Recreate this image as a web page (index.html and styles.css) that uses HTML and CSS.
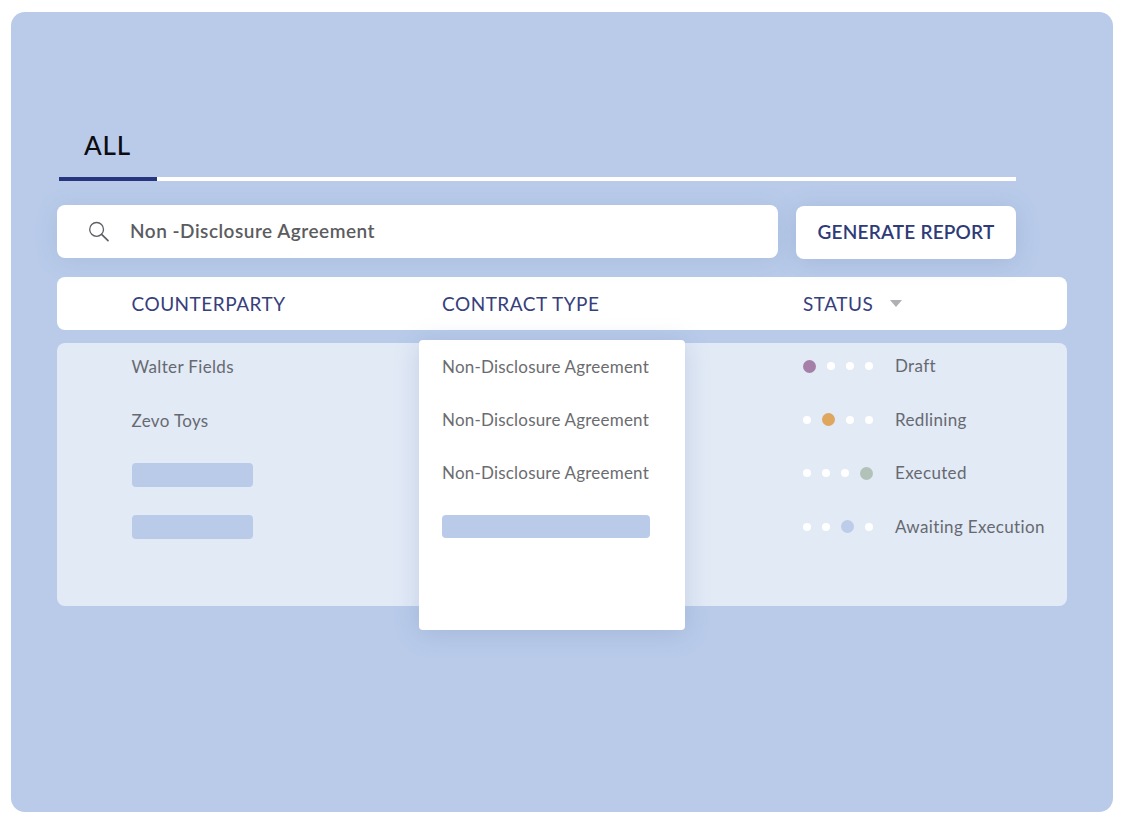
FILE: index.html
```html
<!DOCTYPE html>
<html lang="en">
<head>
<meta charset="utf-8">
<title>Contracts</title>
<link rel="stylesheet" href="styles.css">
</head>
<body>
<main class="card">
  <nav class="tabs">
    <div class="tab">ALL</div>
  </nav>
  <section class="toolbar">
    <div class="search">
      <svg class="search-icon" width="22" height="22" viewBox="0 0 22 22" fill="none" stroke="#5c5f66" stroke-width="1.3" stroke-linecap="round">
        <circle cx="8.6" cy="8.4" r="6.9"/>
        <path d="M13.6 13.4 L20 19.6" stroke-width="1.7"/>
      </svg>
      <span class="search-text">Non -Disclosure Agreement</span>
    </div>
    <button class="report">GENERATE REPORT</button>
  </section>
  <header class="thead">
    <div class="th th-party">COUNTERPARTY</div>
    <div class="th th-type">CONTRACT TYPE</div>
    <div class="th th-status">STATUS <span class="caret"></span></div>
  </header>
  <section class="tbody">
    <div class="col col-party">
      <div class="cell">Walter Fields</div>
      <div class="cell">Zevo Toys</div>
      <div class="cell"><span class="skeleton short"></span></div>
      <div class="cell"><span class="skeleton short"></span></div>
    </div>
    <div class="popup">
      <div class="cell">Non-Disclosure Agreement</div>
      <div class="cell">Non-Disclosure Agreement</div>
      <div class="cell">Non-Disclosure Agreement</div>
      <div class="cell"><span class="skeleton wide"></span></div>
    </div>
    <div class="col col-status">
      <div class="cell status">
        <span class="dots"><i class="dot on draft"></i><i class="dot"></i><i class="dot"></i><i class="dot"></i></span>
        <span>Draft</span>
      </div>
      <div class="cell status">
        <span class="dots"><i class="dot"></i><i class="dot on red"></i><i class="dot"></i><i class="dot"></i></span>
        <span>Redlining</span>
      </div>
      <div class="cell status">
        <span class="dots"><i class="dot"></i><i class="dot"></i><i class="dot"></i><i class="dot on exec"></i></span>
        <span>Executed</span>
      </div>
      <div class="cell status">
        <span class="dots"><i class="dot"></i><i class="dot"></i><i class="dot on await"></i><i class="dot"></i></span>
        <span>Awaiting Execution</span>
      </div>
    </div>
  </section>
</main>
</body>
</html>
```
FILE: styles.css
```css
* { box-sizing: border-box; }
html, body { margin: 0; height: 100%; background: #fff; }
body {
  padding: 12px 11px 14px;
  font-family: Lato, "Liberation Sans", sans-serif;
  overflow: hidden;
}
.card {
  width: 1102px;
  height: 800px;
  background: #b9cbe9;
  border-radius: 14px;
  padding: 115px 46px 0;
}
.tabs {
  width: 957px;
  margin-left: 2px;
  height: 54px;
  border-bottom: 4px solid #fff;
}
.tab {
  width: 98px;
  height: 54px;
  border-bottom: 4px solid #27357e;
  padding: 2px 0 0 25px;
  font-size: 26px;
  letter-spacing: .8px;
  line-height: 32px;
  color: #0b0b10;
  font-weight: 500;
}
.toolbar {
  display: flex;
  margin-top: 24px;
  width: 959px;
  gap: 18px;
  align-items: flex-start;
}
.search {
  width: 721px;
  height: 53px;
  background: #fff;
  border-radius: 8px;
  display: flex;
  align-items: center;
  padding-left: 31px;
  box-shadow: 0 3px 24px rgba(80, 110, 170, .14);
}
.search-icon { flex: none; }
.search-text {
  margin: 0 0 2px 20px;
  font-size: 19px;
  letter-spacing: .5px;
  font-weight: 600;
  color: #5b5c60;
}
.report {
  margin-top: 1px;
  width: 220px;
  height: 53px;
  background: #fff;
  border: 0;
  border-radius: 8px;
  font-family: inherit;
  font-size: 19px;
  letter-spacing: .2px;
  font-weight: 600;
  color: #2f3a78;
  box-shadow: 0 3px 24px rgba(80, 110, 170, .2);
  padding: 0 0 2px;
}
.thead {
  display: flex;
  align-items: center;
  width: 1010px;
  height: 53px;
  margin-top: 18px;
  background: #fff;
  border-radius: 8px;
  font-size: 19px;
  letter-spacing: .5px;
  color: #36407c;
}
.th { white-space: nowrap; }
.th-party { width: 385px; padding-left: 74.5px; }
.th-type { width: 361px; }
.caret {
  display: inline-block;
  margin-left: 11.5px;
  width: 0;
  height: 0;
  border-left: 6.5px solid transparent;
  border-right: 6.5px solid transparent;
  border-top: 7px solid #b0b0b4;
  vertical-align: 4px;
}
.tbody {
  position: relative;
  display: flex;
  justify-content: space-between;
  width: 1010px;
  height: 263px;
  margin-top: 13px;
  background: #e2eaf6;
  border-radius: 8px;
  font-size: 17px;
  letter-spacing: .35px;
  color: #666970;
}
.col { display: flex; flex-direction: column; }
.col-party { padding: 12px 0 0 74.5px; gap: 30px; }
.col-party .cell:last-child { margin-top: -2px; }
.col-status { width: 264px; padding: 11px 0 0 0; gap: 29.5px; }
.cell { height: 24px; line-height: 24px; white-space: nowrap; }
.status { display: flex; align-items: center; gap: 22px; }
.dots { display: flex; align-items: center; gap: 11px; width: 70px; }
.dot {
  width: 8px;
  height: 8px;
  border-radius: 50%;
  background: #fff;
  flex: none;
}
.dot.on { width: 13px; height: 13px; }
.draft { background: #a67fa9; }
.red { background: #dea65f; }
.exec { background: #b3c2b8; }
.await { background: #bccce9; }
.skeleton {
  display: block;
  height: 23.5px;
  background: #b9cbe9;
  border-radius: 4px;
}
.short { width: 121px; }
.wide { width: 208px; margin-top: 1px; height: 23px; }
.popup {
  position: absolute;
  left: 362px;
  top: -3px;
  width: 266px;
  height: 289.5px;
  padding: 15px 0 0 23px;
  background: #fff;
  border-radius: 4px;
  box-shadow: 0 3px 26px rgba(80, 110, 170, .22);
  display: flex;
  flex-direction: column;
  gap: 29px;
  letter-spacing: .2px;
  color: #6b6c70;
}
```
